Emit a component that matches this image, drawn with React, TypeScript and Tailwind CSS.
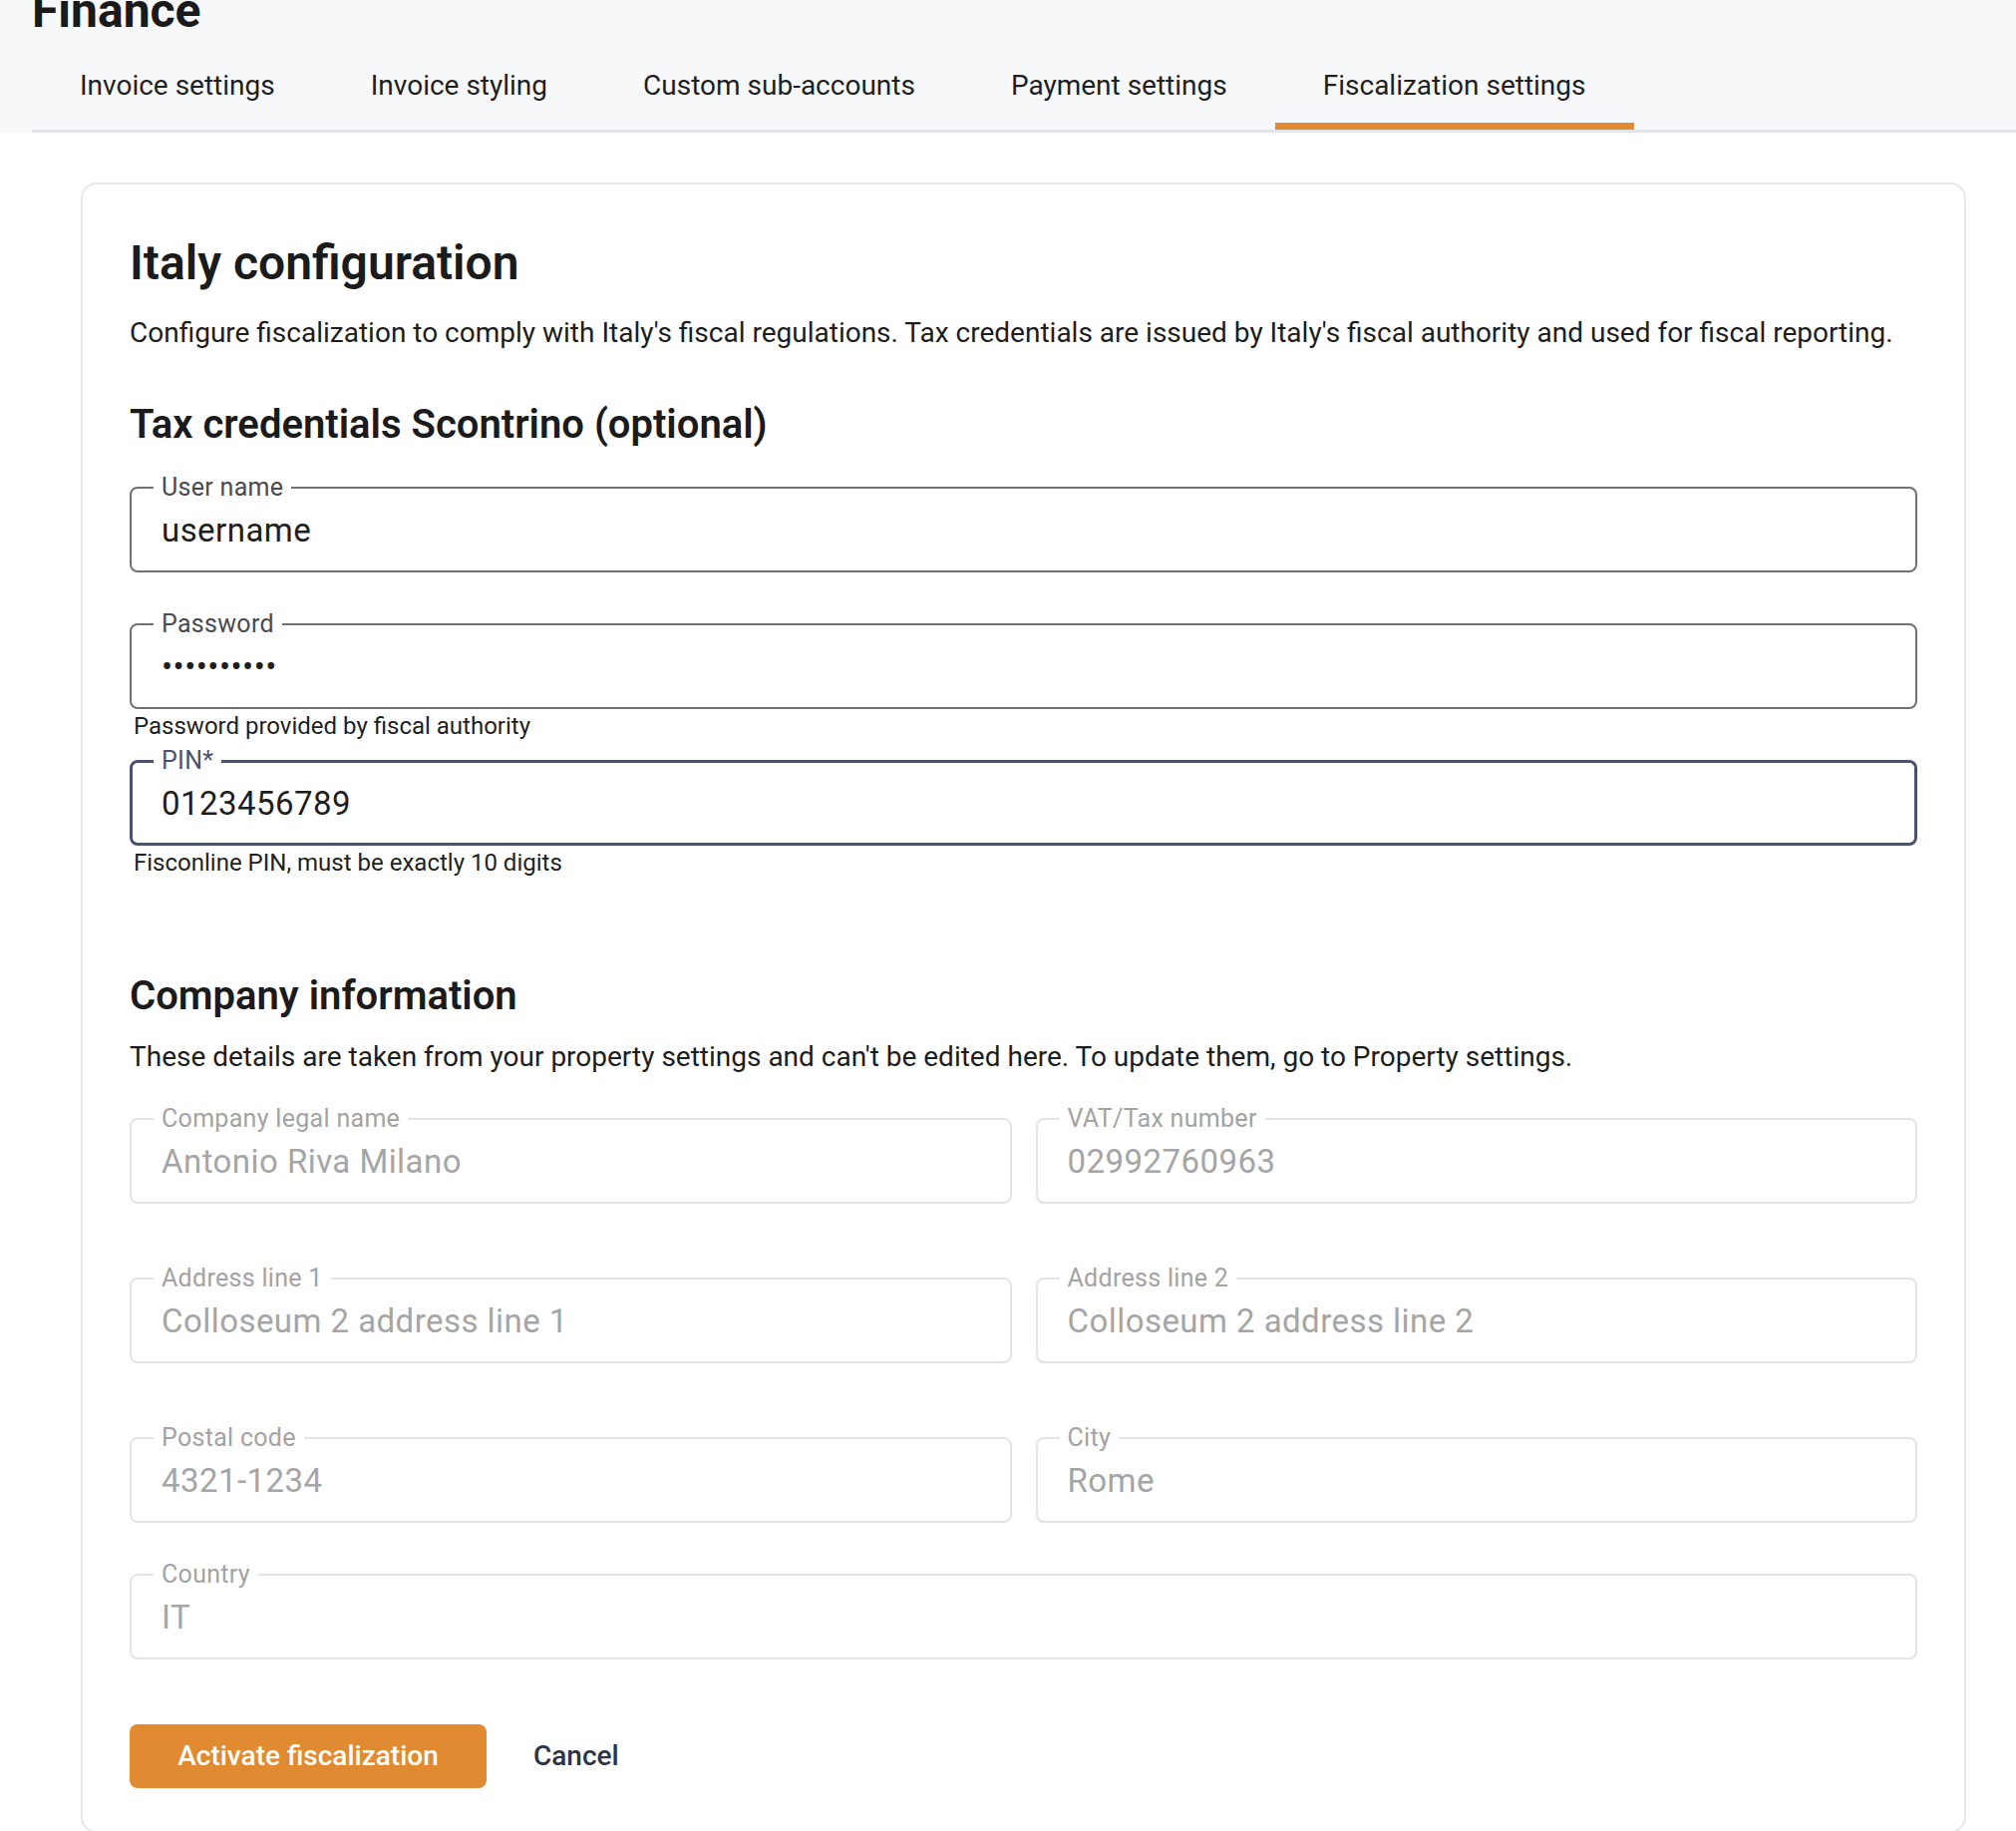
import React from "react";

type Variant = "default" | "focused" | "disabled";

const tabs = [
  "Invoice settings",
  "Invoice styling",
  "Custom sub-accounts",
  "Payment settings",
  "Fiscalization settings",
];

const Field = ({
  label,
  value,
  variant = "default",
  type = "text",
}: {
  label: string;
  value: string;
  variant?: Variant;
  type?: string;
}) => {
  const box =
    variant === "focused"
      ? "border-[3px] border-[#4a5270]"
      : variant === "disabled"
      ? "border-2 border-[#e4e4e4]"
      : "border-2 border-[#707075]";
  const labelCls =
    variant === "focused"
      ? "-top-[16px] left-[21px] text-[#4a5270]"
      : variant === "disabled"
      ? "-top-[15px] left-[22px] text-[#a3a3a3]"
      : "-top-[15px] left-[22px] text-[#4a4a4f]";
  const inputCls =
    variant === "focused"
      ? "px-[29px] text-[#1e1e1e]"
      : variant === "disabled"
      ? "px-[30px] text-[#a5a5a5]"
      : "px-[30px] text-[#1e1e1e]";

  return (
    <div className={`relative h-[86px] rounded-[8px] ${box}`}>
      <span
        className={`absolute bg-white px-2 text-[25px] leading-[28px] tracking-[0.3px] ${labelCls}`}
      >
        {label}
      </span>
      <input
        type={type}
        readOnly
        defaultValue={value}
        className={`h-full w-full bg-transparent text-[33px] tracking-[0.45px] outline-none ${inputCls}`}
      />
    </div>
  );
};

const Helper = ({ children }: { children: React.ReactNode }) => (
  <p className="ml-[4px] mt-[3px] text-[24px] leading-[28px] text-[#1f1f1f]">{children}</p>
);

export default function App() {
  return (
    <div className="min-h-screen bg-white font-['Roboto',sans-serif] text-[#1b1b1b]">
      {/* header */}
      <div className="bg-[#f7f8fa] pl-[32px]">
        <h1 className="-mt-[13px] text-[48px] font-bold leading-[48px] text-[#1a1a1a]">Finance</h1>
        <div className="flex border-b-[3px] border-[#e1e3ea]">
          {tabs.map((t, i) => (
            <button
              key={t}
              className={`border-b-[7px] px-[48px] pb-[21px] pt-[35px] text-[28px] leading-[32px] text-[#1f1f1f] ${
                i === tabs.length - 1 ? "border-[#e08a32]" : "border-transparent"
              }`}
            >
              {t}
            </button>
          ))}
        </div>
      </div>

      {/* content */}
      <div className="pl-[81px] pr-[50px] pt-[50px]">
        <div className="rounded-[16px] border-2 border-[#e4e7f0] px-[47px] pb-[43px] pt-[51px]">
          <h2 className="text-[48px] font-semibold leading-[56px]">Italy configuration</h2>
          <p className="mt-[26px] text-[28px] leading-[32px] text-[#1d1d1d]">
            Configure fiscalization to comply with Italy's fiscal regulations. Tax credentials are
            issued by Italy's fiscal authority and used for fiscal reporting.
          </p>

          <h3 className="mt-[52px] text-[40px] font-semibold leading-[48px]">
            Tax credentials Scontrino (optional)
          </h3>

          <div className="mt-[38px]">
            <Field label="User name" value="username" />
          </div>
          <div className="mt-[51px]">
            <Field label="Password" value="1234567890" type="password" />
            <Helper>Password provided by fiscal authority</Helper>
          </div>
          <div className="mt-[20px]">
            <Field label="PIN*" value="0123456789" variant="focused" />
            <Helper>Fisconline PIN, must be exactly 10 digits</Helper>
          </div>

          <h3 className="mt-[96px] text-[40px] font-semibold leading-[48px]">Company information</h3>
          <p className="mt-[21px] text-[28px] leading-[32px] text-[#1d1d1d]">
            These details are taken from your property settings and can't be edited here. To update
            them, go to Property settings.
          </p>

          <div className="mt-[45px] grid grid-cols-2 gap-x-[24px] gap-y-[74px]">
            <Field label="Company legal name" value="Antonio Riva Milano" variant="disabled" />
            <Field label="VAT/Tax number" value="02992760963" variant="disabled" />
            <Field label="Address line 1" value="Colloseum 2 address line 1" variant="disabled" />
            <Field label="Address line 2" value="Colloseum 2 address line 2" variant="disabled" />
            <Field label="Postal code" value="4321-1234" variant="disabled" />
            <Field label="City" value="Rome" variant="disabled" />
          </div>
          <div className="mt-[51px]">
            <Field label="Country" value="IT" variant="disabled" />
          </div>

          <div className="mt-[65px] flex items-center gap-[47px]">
            <button className="h-[64px] w-[358px] rounded-[8px] bg-[#e08a32] text-[28px] font-medium text-white">
              Activate fiscalization
            </button>
            <button className="text-[28px] font-medium text-[#2e3346]">Cancel</button>
          </div>
        </div>
      </div>
    </div>
  );
}
